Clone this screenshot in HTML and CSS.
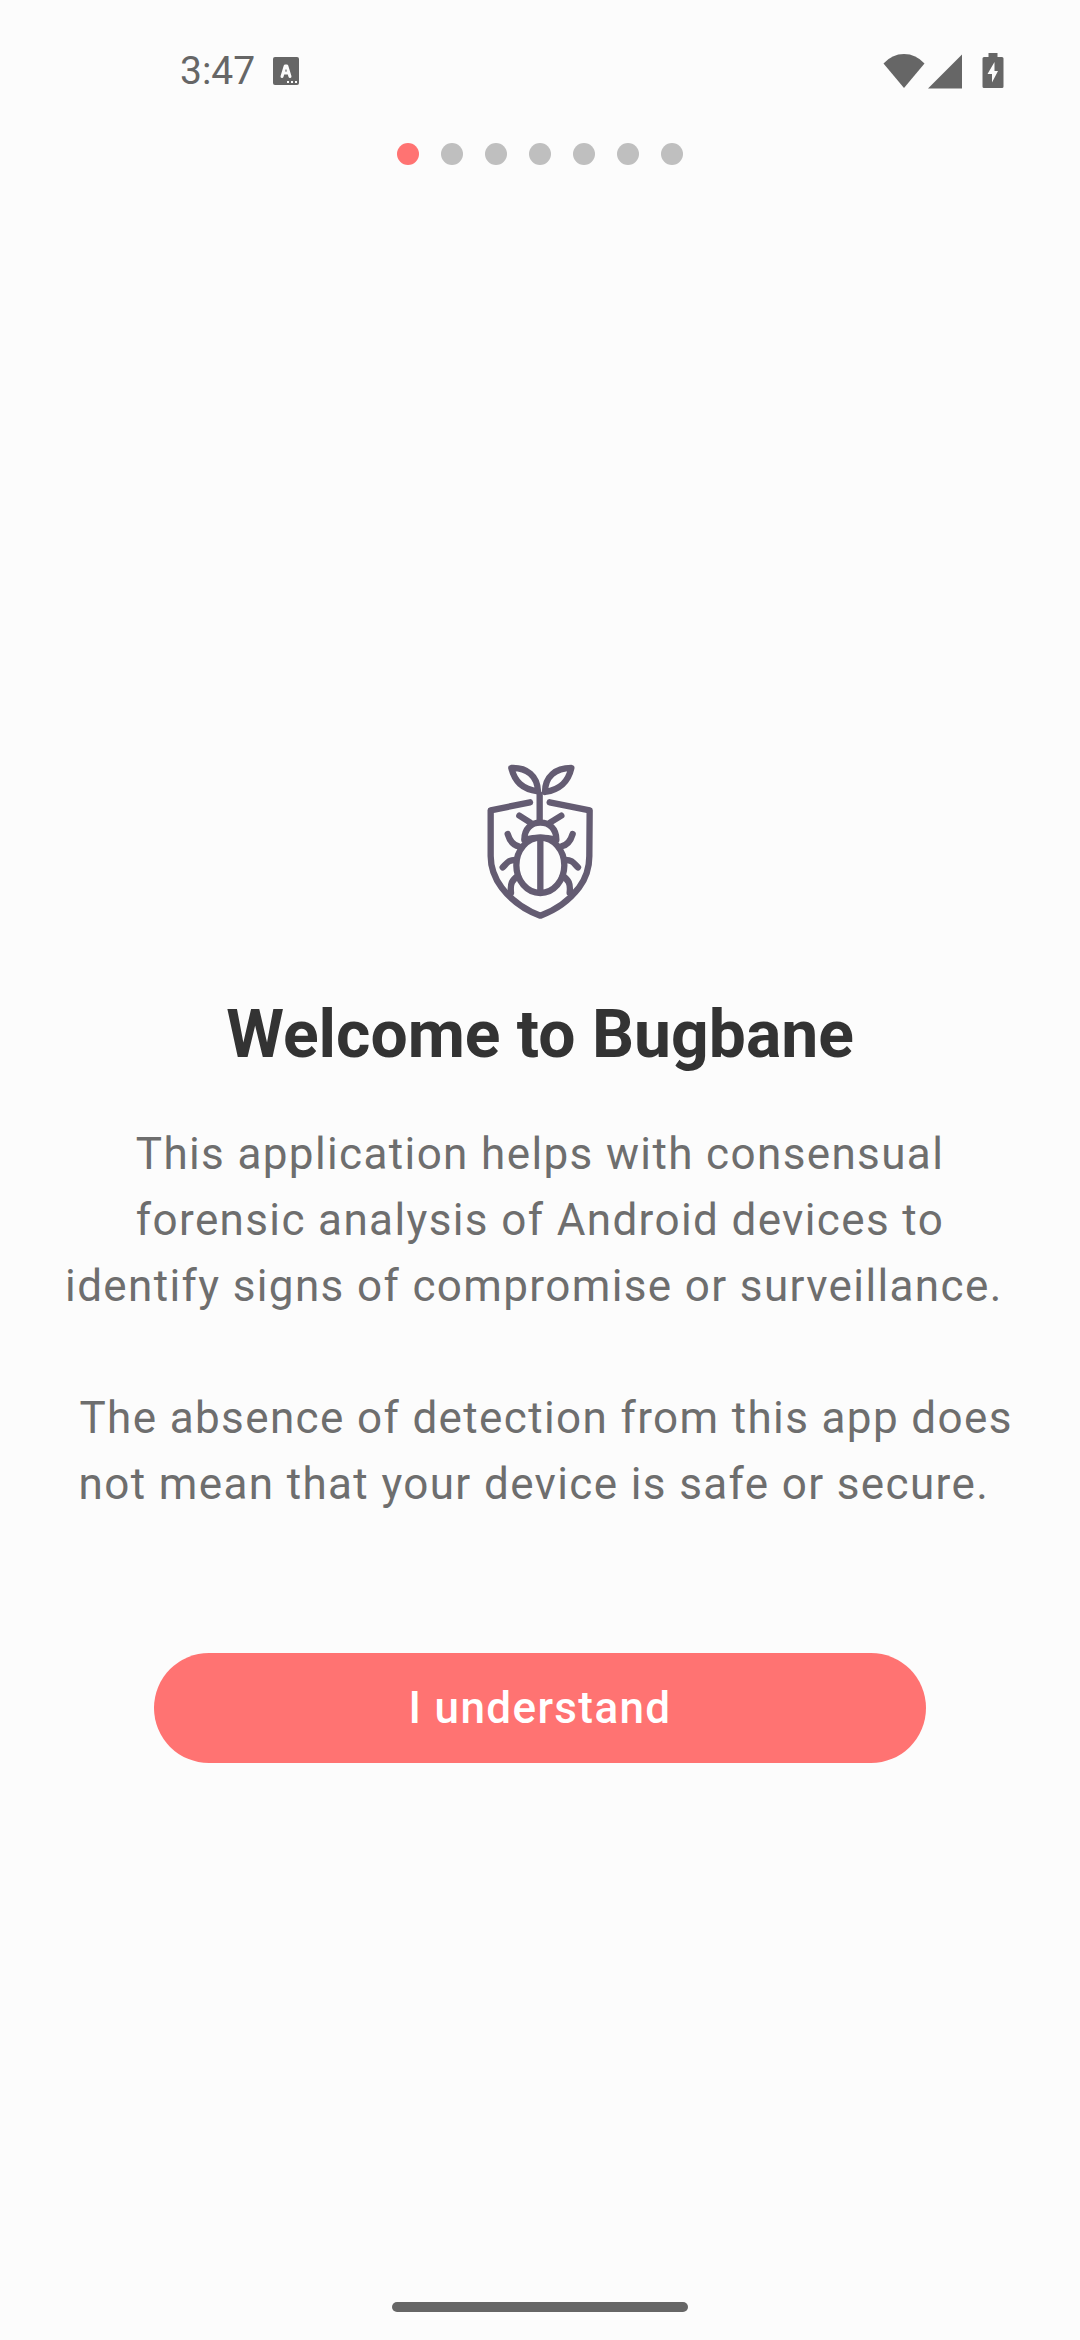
FILE: index.html
```html
<!DOCTYPE html>
<html lang="en">
<head>
<meta charset="utf-8">
<meta name="viewport" content="width=device-width, initial-scale=1">
<title>Welcome to Bugbane</title>
<link rel="stylesheet" href="styles.css">
</head>
<body class="screen">
  <header class="status-bar">
    <div class="status-group">
      <time class="clock">3:47</time>
      <svg class="app-icon" width="26" height="28" viewBox="0 0 26 28" aria-hidden="true">
        <rect width="26" height="28" rx="2" fill="#666"/>
        <path d="M9 19.500 12.200 9h1.600L17 19.500M10.200 16h5.600" fill="none" stroke="#fcfcfc" stroke-width="3" stroke-linecap="round" stroke-linejoin="round"/>
        <path d="M14 24h2v2h-2zM18 24h2v2h-2zM22 24h2v2h-2z" fill="#fcfcfc"/>
      </svg>
    </div>
    <div class="status-group status-right">
      <svg width="42" height="36" viewBox="0 0 42 36" aria-hidden="true"><path d="M21 35 .500 10.500Q9 1 21 1T41.500 10.500Z" fill="#666"/></svg>
      <svg width="36" height="36" viewBox="0 0 36 36" aria-hidden="true"><path d="M1 35.500 35 1.500v34Z" fill="#666"/></svg>
      <svg class="battery" width="22" height="36" viewBox="0 0 22 36" aria-hidden="true">
        <path d="M6.500 0h9v4H20q1.500 0 1.500 1.500v28q0 1.500-1.500 1.500H2q-1.500 0-1.500-1.500v-28Q.500 4 2 4h4.500Z" fill="#666"/>
        <path d="M12.500 9 5.500 21H10v8.500L16 18h-3.500Z" fill="#fcfcfc"/>
      </svg>
    </div>
  </header>
  <ol class="steps" aria-label="Setup progress">
    <li class="step step-current" aria-current="step"></li>
    <li class="step"></li>
    <li class="step"></li>
    <li class="step"></li>
    <li class="step"></li>
    <li class="step"></li>
    <li class="step"></li>
  </ol>
  <main class="welcome">
    <svg class="logo" width="140" height="180" viewBox="0 0 420 540" role="img" aria-label="Bugbane">
      <g fill="none" stroke="#645c72" stroke-width="19" stroke-linecap="round" stroke-linejoin="round">
        <path d="M180 157 62 181V318C62 355 75 386 95 413 125 452 166 481 211 497 256 481 297 452 327 413 347 386 358 355 358 318L359 181 239 157"/>
        <path d="M209 134V212"/>
        <path d="M204 124C156 117 134 94 124 54 171 52 202 78 204 124Z"/>
        <path d="M225 126C273 118 295 94 304 54 256 54 225 80 225 126Z"/>
        <path d="M163 269C163 236 184 218 211 218S259 236 259 269"/>
        <path d="M165 269Q211 257 257 269"/>
        <ellipse cx="211" cy="346" rx="72" ry="83"/>
        <path d="M211 265V427"/>
        <path d="M148 197 181 218M274 197 240 218"/>
        <path d="M113 252C119 272 128 286 147 289M308 252C302 272 293 286 274 289"/>
        <path d="M98 352C110 341 115 329 137 330M324 352C312 341 307 329 285 330"/>
        <path d="M144 378C126 390 120 400 123 428M278 378C296 390 302 400 299 428"/>
      </g>
    </svg>
    <h1 class="title">Welcome to Bugbane</h1>
    <p class="message">This application helps with consensual<br>forensic analysis of Android devices to<br>identify signs of compromise or surveillance.&nbsp;<br><br>&nbsp;The absence of detection from this app does<br>not mean that your device is safe or secure.&nbsp;</p>
    <button class="accept" type="button">I understand</button>
  </main>
  <footer class="nav-bar"><div class="home-handle"></div></footer>
</body>
</html>
```
FILE: styles.css
```css
* {
  box-sizing: border-box;
}

.screen {
  display: flex;
  flex-direction: column;
  min-height: 100vh;
  margin: 0;
  background: #fcfcfc;
  color: #6e6e6e;
  font-family: Roboto, "Noto Sans", sans-serif;
}

.status-bar {
  display: flex;
  align-items: center;
  justify-content: space-between;
  height: 143px;
  padding: 0 76px 2px 180px;
}

.status-group {
  display: flex;
  align-items: center;
  gap: 18px;
}

.status-right {
  gap: 2px;
}

.battery {
  margin-left: 17px;
}

.clock {
  color: #666;
  font-size: 39px;
  line-height: 46px;
}

.steps {
  display: flex;
  justify-content: center;
  gap: 22px;
  margin: 0;
  padding: 0;
  list-style: none;
}

.step {
  width: 22px;
  height: 22px;
  border-radius: 50%;
  background: #bfbfbf;
}

.step-current {
  background: #ff7372;
}

.welcome {
  display: flex;
  flex: 1;
  flex-direction: column;
  align-items: center;
  justify-content: center;
  padding: 74px 44px 0;
}

.title {
  margin: 66px 0 47px;
  color: #333;
  font-size: 66px;
  font-weight: 700;
  line-height: 78px;
  text-align: center;
}

.message {
  margin: 0;
  font-size: 44px;
  letter-spacing: 0.03125em;
  line-height: 66px;
  text-align: center;
  white-space: nowrap;
}

.accept {
  width: 100%;
  max-width: 772px;
  height: 110px;
  margin-top: 136px;
  padding: 0;
  border: 0;
  border-radius: 55px;
  background: #ff7372;
  color: #fff;
  font: 500 44px/66px Roboto, "Noto Sans", sans-serif;
  letter-spacing: 0.03125em;
}

.nav-bar {
  display: flex;
  justify-content: center;
  padding: 28px 0;
}

.home-handle {
  width: 296px;
  height: 10px;
  border-radius: 5px;
  background: #666;
}
```
